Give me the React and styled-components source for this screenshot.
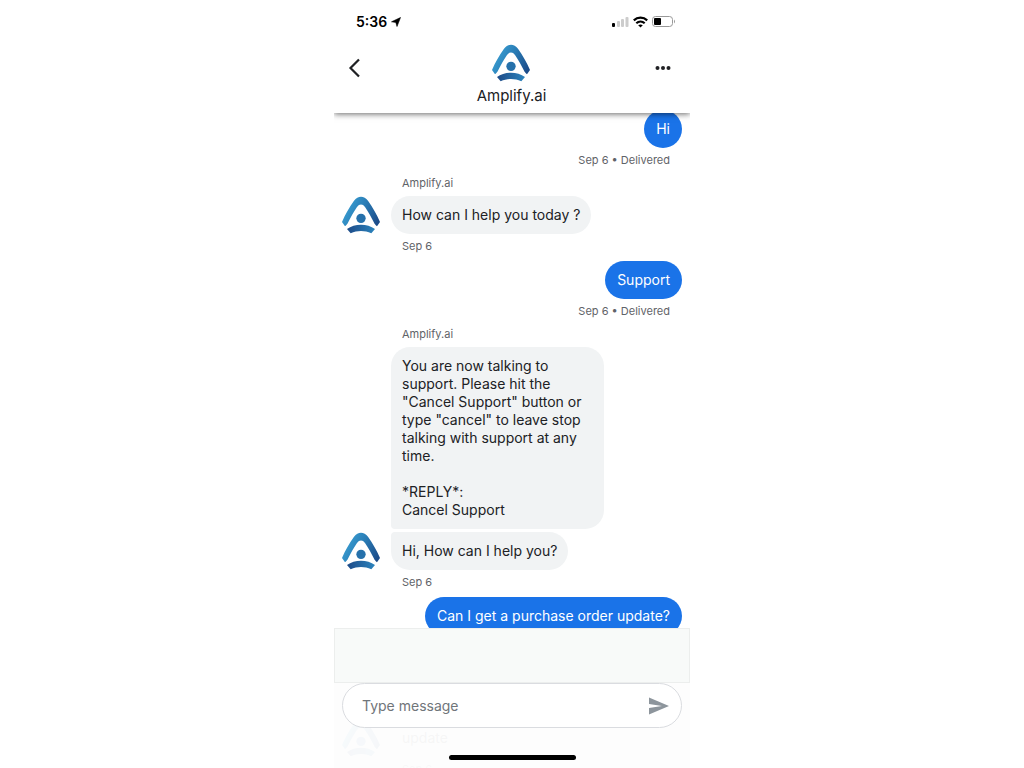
import React, {useId, useState} from "react";
import styled, {createGlobalStyle} from "styled-components";

const Logo = ({size = 38}) => {
  const id = useId();

  return (
    <svg width={size} height={size} viewBox="0 0 114 114" aria-hidden="true">
      <defs>
        <linearGradient id={`${id}-arch`} x1="0" y1="0.3" x2="1" y2="0.7">
          <stop offset="0" stopColor="#3ba3d6" />
          <stop offset="0.5" stopColor="#2a7db6" />
          <stop offset="1" stopColor="#1c4c8a" />
        </linearGradient>
        <linearGradient id={`${id}-base`} x1="0" y1="0" x2="1" y2="0">
          <stop offset="0" stopColor="#1d4a87" />
          <stop offset="1" stopColor="#2c84bd" />
        </linearGradient>
      </defs>
      <path
        d="M0 78 C10 54 22 34 36 14 C48 -2 66 -2 78 14 C92 34 104 54 114 78 L105 91 C101 88 98 84 95 78 C88 64 80 50 69 33 C62 23 52 23 45 33 C34 50 26 64 19 78 C16 84 13 88 9 91 Z"
        fill={`url(#${id}-arch)`}
      />
      <circle cx="57" cy="67" r="14" fill="#2671ab" />
      <path
        d="M15 99 C38 82 76 82 99 99 L88 112 C68 103 46 103 26 112 Z"
        fill={`url(#${id}-base)`}
      />
    </svg>
  );
};

const StatusIcons = () => (
  <svg width="66" height="14" viewBox="0 0 66 14" aria-hidden="true">
    <rect x="1" y="8" width="3" height="4" rx="1" fill="#000" />
    <rect x="6" y="6" width="3" height="6" rx="1" fill="#ccc" />
    <rect x="10" y="4" width="3" height="8" rx="1" fill="#ccc" />
    <rect x="14.500" y="2" width="3" height="10" rx="1" fill="#ccc" />
    <g fill="none" stroke="#000" strokeWidth="2.200">
      <path d="M22.800 5.400 C26.600 1.800 32.400 1.800 36.200 5.400" />
      <path d="M25.300 8.300 C27.700 6.100 31.300 6.100 33.700 8.300" />
    </g>
    <path d="M27.200 10.300 Q29.500 8.700 31.800 10.300 L29.500 12.600 Z" fill="#000" />
    <rect x="41.500" y="1.500" width="20" height="10" rx="3" fill="none" stroke="#999" />
    <rect x="43" y="3" width="7" height="7" rx="1" fill="#000" />
    <path d="M63 4.500 Q65 6.500 63 8.500 Z" fill="#999" />
  </svg>
);

const Incoming = ({name, time, messages}) => (
  <Group>
    <Sender>{name}</Sender>
    <AvatarRow>
      <Logo />
      <Bubbles>
        {messages.map((text, i) => (
          <Bubble key={i} $first={i === 0} $last={i === messages.length - 1}>
            {text}
          </Bubble>
        ))}
      </Bubbles>
    </AvatarRow>
    <Meta>{time}</Meta>
  </Group>
);

const Outgoing = ({text, time}) => (
  <Group $own>
    <OwnBubble>{text}</OwnBubble>
    <Meta>{time} • Delivered</Meta>
  </Group>
);

const support = `You are now talking to support. Please hit the "Cancel Support" button or type "cancel" to leave stop talking with support at any time.

*REPLY*:
Cancel Support`;

const App = () => {
  const [message, setMessage] = useState("");

  return (
    <>
      <GlobalStyle />
      <Phone>
        <Header>
          <StatusBar>
            <Clock>
              5:36
              <svg width="10" height="10" viewBox="0 0 10 10" aria-hidden="true">
                <path d="M9.500 0.500 L6 9.500 L4.800 5.400 L0.500 4.800 Z" fill="#000" stroke="#000" strokeWidth="0.600" />
              </svg>
            </Clock>
            <StatusIcons />
          </StatusBar>
          <Nav>
            <IconButton type="button" aria-label="Back">
              <svg width="14" height="20" viewBox="0 0 14 20" fill="none">
                <path d="M11 1.500 L2.500 10 L11 18.500" stroke="#202124" strokeWidth="2.200" />
              </svg>
            </IconButton>
            <Brand>
              <Logo />
              <Title>Amplify.ai</Title>
            </Brand>
            <IconButton type="button" aria-label="More">
              <svg width="16" height="20" viewBox="0 0 16 20" fill="#202124">
                <circle cx="2.500" cy="10" r="2" />
                <circle cx="8" cy="10" r="2" />
                <circle cx="13.500" cy="10" r="2" />
              </svg>
            </IconButton>
          </Nav>
        </Header>

        <Chat>
          <Outgoing text="Hi" time="Sep 6" />
          <Incoming name="Amplify.ai" time="Sep 6" messages={["How can I help you today ?"]} />
          <Outgoing text="Support" time="Sep 6" />
          <Incoming
            name="Amplify.ai"
            time="Sep 6"
            messages={[support, "Hi, How can I help you?"]}
          />
          <Outgoing text="Can I get a purchase order update?" time="Sep 6" />
          <Incoming name="Amplify.ai" time="Sep 6" messages={["\n\nupdate"]} />
        </Chat>

        <Footer>
          <Suggestions />
          <Composer onSubmit={(e) => e.preventDefault()}>
            <Field>
              <Input
                aria-label="Type message"
                placeholder="Type message"
                value={message}
                onChange={(e) => setMessage(e.target.value)}
              />
              <IconButton type="submit" aria-label="Send">
                <svg width="20" height="18" viewBox="0 0 20 18" fill="#8d959c">
                  <path d="M0 0.500 L20 9 L0 17.500 L0 11 L13 9 L0 7 Z" />
                </svg>
              </IconButton>
            </Field>
            <HomeIndicator />
          </Composer>
        </Footer>
      </Phone>
    </>
  );
};

const GlobalStyle = createGlobalStyle`
  * {
    box-sizing: border-box;
  }

  body {
    margin: 0;
    background: #fff;
    color: #202124;
    font-family: Inter, "Liberation Sans", sans-serif;
  }
`;

const Phone = styled.main`
  display: grid;
  grid-template-rows: auto 1fr auto;
  grid-template-columns: 100%;
  max-width: 356px;
  height: 100vh;
  margin: 0 auto;
  overflow: hidden;
`;

const Header = styled.header`
  grid-area: 1 / 1;
  z-index: 1;
  padding-bottom: 7px;
  background: #fff;
  box-shadow: 0 1px 6px rgba(0, 0, 0, 0.6);
`;

const StatusBar = styled.div`
  display: flex;
  align-items: center;
  justify-content: space-between;
  padding: 12px 13px 12px 22px;
`;

const Clock = styled.span`
  display: flex;
  align-items: center;
  gap: 4px;
  font-size: 14px;
  line-height: 20px;
  font-weight: 600;
  color: #000;
`;

const Nav = styled.nav`
  display: grid;
  grid-template-columns: 1fr auto 1fr;
  align-items: start;
  padding: 0 17px 0 12px;

  > :first-child {
    justify-self: start;
  }

  > :last-child {
    justify-self: end;
  }
`;

const Brand = styled.div`
  display: flex;
  flex-direction: column;
  align-items: center;
  padding-left: 4px;
`;

const Title = styled.h1`
  margin: 4px 0 0;
  font-size: 15px;
  line-height: 20px;
  font-weight: 400;
`;

const IconButton = styled.button`
  display: flex;
  align-items: center;
  padding: 14px 2px;
  border: 0;
  background: none;
  cursor: pointer;
`;

// Runs on under the footer, which is slightly see-through
const Chat = styled.section`
  grid-area: 2 / 1 / 4 / 2;
  display: flex;
  flex-direction: column;
  gap: 7px;
  min-height: 0;
  margin-top: -3px;
  padding: 0 8px;
  overflow: hidden;
`;

const Group = styled.div`
  display: flex;
  flex-direction: column;
  flex-shrink: 0;
  align-items: ${(props) => (props.$own ? "flex-end" : "stretch")};
`;

const Sender = styled.p`
  margin: 0 0 5px 60px;
  font-size: 11px;
  line-height: 16px;
  color: #5f6368;
`;

const Meta = styled.p`
  margin: 4px 12px 0 60px;
  font-size: 11px;
  line-height: 16px;
  color: #5f6368;
`;

const AvatarRow = styled.div`
  display: flex;
  align-items: flex-end;
  gap: 11px;
`;

const Bubbles = styled.div`
  display: flex;
  flex-direction: column;
  align-items: flex-start;
  gap: 3px;
`;

const Bubble = styled.p`
  max-width: 213px;
  margin: 0;
  padding: 10px 11px;
  border-radius: 19px;
  border-top-left-radius: ${(props) => (props.$first ? "19px" : "4px")};
  border-bottom-left-radius: ${(props) => (props.$last ? "19px" : "4px")};
  background: #f1f3f4;
  font-size: 14px;
  line-height: 18px;
  white-space: pre-wrap;
`;

const OwnBubble = styled(Bubble)`
  max-width: 280px;
  padding: 10px 12px;
  border-radius: 19px;
  background: #1a73e8;
  color: #fff;
`;

const Footer = styled.footer`
  grid-area: 3 / 1;
  z-index: 1;
`;

const Suggestions = styled.div`
  height: 55px;
  border: 1px solid #eceeed;
  background: #f8faf9;
`;

const Composer = styled.form`
  display: flex;
  flex-direction: column;
  align-items: center;
  gap: 27px;
  padding: 0 8px 8px;
  background: rgba(253, 253, 253, 0.97);
`;

const Field = styled.div`
  display: flex;
  align-items: center;
  width: 100%;
  height: 45px;
  padding: 0 10px 0 19px;
  border: 1px solid #dadce0;
  border-radius: 23px;
  background: #fff;
`;

const Input = styled.input`
  flex: 1;
  min-width: 0;
  padding: 0;
  border: 0;
  outline: 0;
  background: none;
  color: #202124;
  font-family: inherit;
  font-size: 14px;
  line-height: 20px;

  &::placeholder {
    color: #70757a;
    opacity: 1;
  }
`;

const HomeIndicator = styled.div`
  width: 127px;
  height: 5px;
  border-radius: 3px;
  background: #000;
`;

export default App;
